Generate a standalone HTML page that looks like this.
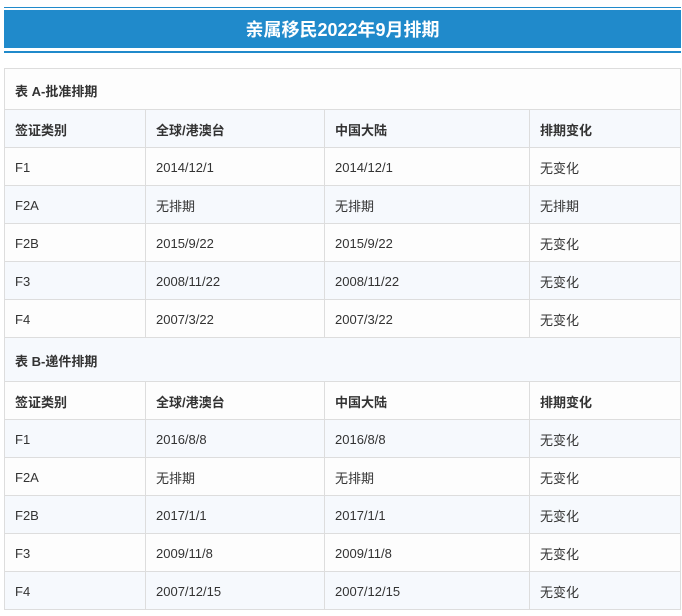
<!DOCTYPE html>
<html><head><meta charset="utf-8"><style>
body{margin:0;background:#fff;width:682px;height:616px;overflow:hidden;font-family:"Liberation Sans","Noto Sans CJK SC",sans-serif;}
.hd{position:absolute;left:4px;top:7px;width:677px;height:43px;border-top:1px solid #208acb;border-bottom:2px solid #208acb;}
.hd div{margin-top:2px;height:38px;background:#208acb;color:#fff;font-weight:bold;font-size:18px;line-height:40px;text-align:center;}
table{position:absolute;left:4px;top:68px;width:677px;border-collapse:collapse;font-size:13px;color:#333;}
td{border:1px solid #ddd;padding:2px 0 0 10px;height:35px;}
tr:nth-child(odd) td{background:#fdfdfd}
tr:nth-child(even) td{background:#f6f9fd}
.t td{font-weight:bold;height:38px;}
.h td{font-weight:bold;}
</style></head><body>
<div class="hd"><div>亲属移民2022年9月排期</div></div>
<table>
<colgroup><col style="width:141px"><col style="width:179px"><col style="width:205px"><col></colgroup>
<tr class="t"><td colspan="4">表 A-批准排期</td></tr>
<tr class="h"><td>签证类别</td><td>全球/港澳台</td><td>中国大陆</td><td>排期变化</td></tr>
<tr><td>F1</td><td>2014/12/1</td><td>2014/12/1</td><td>无变化</td></tr>
<tr><td>F2A</td><td>无排期</td><td>无排期</td><td>无排期</td></tr>
<tr><td>F2B</td><td>2015/9/22</td><td>2015/9/22</td><td>无变化</td></tr>
<tr><td>F3</td><td>2008/11/22</td><td>2008/11/22</td><td>无变化</td></tr>
<tr><td>F4</td><td>2007/3/22</td><td>2007/3/22</td><td>无变化</td></tr>
<tr class="t"><td colspan="4" style="height:41px">表 B-递件排期</td></tr>
<tr class="h"><td>签证类别</td><td>全球/港澳台</td><td>中国大陆</td><td>排期变化</td></tr>
<tr><td>F1</td><td>2016/8/8</td><td>2016/8/8</td><td>无变化</td></tr>
<tr><td>F2A</td><td>无排期</td><td>无排期</td><td>无变化</td></tr>
<tr><td>F2B</td><td>2017/1/1</td><td>2017/1/1</td><td>无变化</td></tr>
<tr><td>F3</td><td>2009/11/8</td><td>2009/11/8</td><td>无变化</td></tr>
<tr><td>F4</td><td>2007/12/15</td><td>2007/12/15</td><td>无变化</td></tr>
</table>
</body></html>
